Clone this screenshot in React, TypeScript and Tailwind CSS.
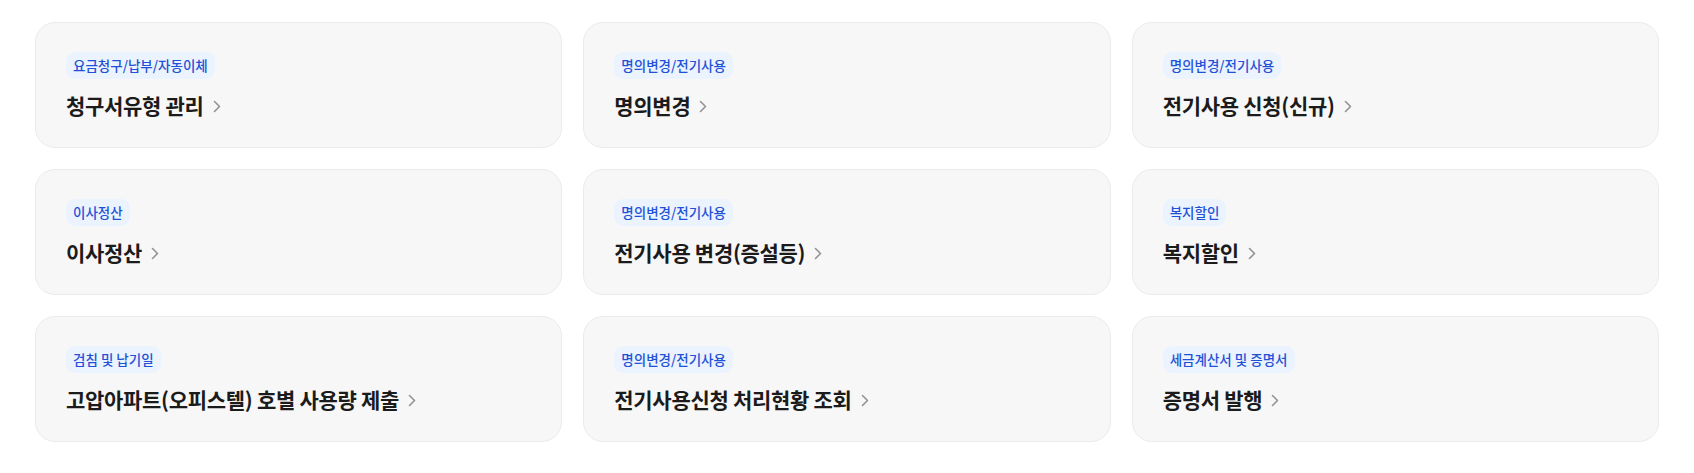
import React from "react";

type Item = { tag: string; title: string };

const items: Item[] = [
  { tag: "요금청구/납부/자동이체", title: "청구서유형 관리" },
  { tag: "명의변경/전기사용", title: "명의변경" },
  { tag: "명의변경/전기사용", title: "전기사용 신청(신규)" },
  { tag: "이사정산", title: "이사정산" },
  { tag: "명의변경/전기사용", title: "전기사용 변경(증설등)" },
  { tag: "복지할인", title: "복지할인" },
  { tag: "검침 및 납기일", title: "고압아파트(오피스텔) 호별 사용량 제출" },
  { tag: "명의변경/전기사용", title: "전기사용신청 처리현황 조회" },
  { tag: "세금계산서 및 증명서", title: "증명서 발행" },
];

function Chevron() {
  return (
    <svg width="8" height="13" viewBox="0 0 8 13" fill="none" className="mt-[3px] shrink-0">
      <path d="M1.5 1.5L6.5 6.5L1.5 11.5" stroke="#939393" strokeWidth="1.6" strokeLinecap="round" strokeLinejoin="round" />
    </svg>
  );
}

function ServiceCard({ tag, title }: Item) {
  return (
    <a
      href="#"
      className="flex flex-col items-start rounded-[20px] border border-[#ebebeb] bg-[#f7f7f7] pl-[30px] pr-[30px] pt-[29px] pb-[28px]"
    >
      <span className="flex h-[27px] items-center rounded-[9px] bg-[#ebf3ff] px-[7px] text-[13.5px] font-medium text-[#1f51d6]">
        {tag}
      </span>
      <span className="mt-[12px] flex items-center gap-[9px] text-[21px] leading-[28px] font-bold tracking-[-0.3px] text-[#1b1b1b]">
        {title}
        <Chevron />
      </span>
    </a>
  );
}

export default function App() {
  return (
    <div
      className="min-h-[473px] bg-white px-[35px] pt-[22px]"
      style={{ fontFamily: '"Noto Sans CJK KR", "Noto Sans", sans-serif' }}
    >
      <div className="grid grid-cols-3 gap-x-[21px] gap-y-[21px]">
        {items.map((it, i) => (
          <ServiceCard key={i} {...it} />
        ))}
      </div>
    </div>
  );
}
